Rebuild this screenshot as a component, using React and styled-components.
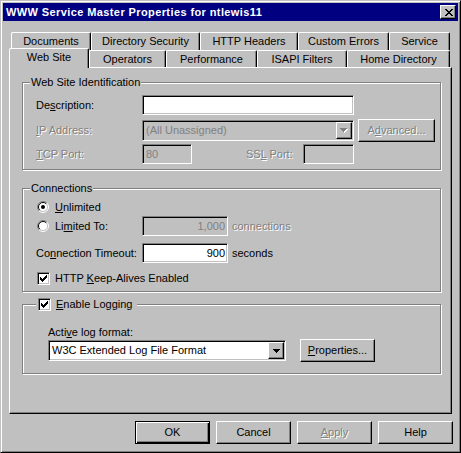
import React from 'react';
import styled, { createGlobalStyle, css } from 'styled-components';

const GlobalStyle = createGlobalStyle`
  html, body {
    margin: 0;
    padding: 0;
    background: #c0c0c0;
  }
  body {
    font-family: "Liberation Sans", Arial, sans-serif;
    font-size: 11px;
    line-height: 13px;
    color: #000;
  }
`;

const backTabs = [
  { label: 'Documents', w: 80 },
  { label: 'Directory Security', w: 109 },
  { label: 'HTTP Headers', w: 98 },
  { label: 'Custom Errors', w: 91 },
  { label: 'Service', w: 61 },
];

const frontTabs = [
  { label: 'Web Site', w: 80, active: true },
  { label: 'Operators', w: 77 },
  { label: 'Performance', w: 91 },
  { label: 'ISAPI Filters', w: 90 },
  { label: 'Home Directory', w: 103 },
];

// pixel glyphs, one rect per run: [x, y, width]
const closeRuns = [
  [0, 0, 2], [6, 0, 2],
  [1, 1, 2], [5, 1, 2],
  [2, 2, 4],
  [3, 3, 2],
  [2, 4, 4],
  [1, 5, 2], [5, 5, 2],
  [0, 6, 2], [6, 6, 2],
];

const checkRuns = [
  [6, 0, 1],
  [5, 1, 2],
  [0, 2, 1], [4, 2, 3],
  [0, 3, 2], [3, 3, 3],
  [0, 4, 5],
  [1, 5, 3],
  [2, 6, 1],
];

const arrowRuns = [
  [0, 0, 7],
  [1, 1, 5],
  [2, 2, 3],
  [3, 3, 1],
];

const runsToPath = (runs) => runs.map(([x, y, w]) => `M${x} ${y}h${w}v1h-${w}z`).join('');

function Glyph({ runs, w, h, color = '#000', shadow }) {
  const d = runsToPath(runs);
  return (
    <svg width={shadow ? w + 1 : w} height={shadow ? h + 1 : h} shapeRendering="crispEdges">
      {shadow && <path d={d} fill="#fff" transform="translate(1 1)" />}
      <path d={d} fill={color} />
    </svg>
  );
}

function Radio({ checked }) {
  return (
    <svg width="12" height="12" viewBox="0 0 12 12">
      <circle cx="6" cy="6" r="5" fill="#fff" />
      <path d="M2.1 9.9A5.5 5.5 0 0 1 9.9 2.1" fill="none" stroke="#808080" />
      <path d="M9.9 2.1A5.5 5.5 0 0 1 2.1 9.9" fill="none" stroke="#fff" />
      <path d="M2.8 9.2A4.5 4.5 0 0 1 9.2 2.8" fill="none" stroke="#000" />
      <path d="M9.2 2.8A4.5 4.5 0 0 1 2.8 9.2" fill="none" stroke="#c0c0c0" />
      {checked && <circle cx="6" cy="6" r="2" fill="#000" />}
    </svg>
  );
}

function Check({ checked }) {
  return <CheckBox>{checked && <Glyph runs={checkRuns} w={7} h={7} />}</CheckBox>;
}

function Combo({ w, disabled, children }) {
  return (
    <ComboField $w={w} $disabled={disabled}>
      <ComboText>{children}</ComboText>
      <DropButton>
        <Glyph runs={arrowRuns} w={7} h={4} color={disabled ? '#808080' : '#000'} shadow={disabled} />
      </DropButton>
    </ComboField>
  );
}

export default function App() {
  return (
    <>
      <GlobalStyle />
      <Window>
        <TitleBar>
          <Title>WWW Service Master Properties for ntlewis11</Title>
          <CloseButton aria-label="Close">
            <Glyph runs={closeRuns} w={8} h={7} />
          </CloseButton>
        </TitleBar>
        <Body>
          <TabRow $inset={2}>
            {backTabs.map((t) => (
              <Tab key={t.label} $w={t.w}>{t.label}</Tab>
            ))}
          </TabRow>
          <TabRow>
            {frontTabs.map((t) => (
              <Tab key={t.label} $w={t.w} $active={t.active}>{t.label}</Tab>
            ))}
          </TabRow>
          <Panel>
            <Group $mt={14} $h={88}>
              <Legend $ml={-6}>Web Site Identification</Legend>
              <Row $mt={6}>
                <Caption $w={106}>De<u>s</u>cription:</Caption>
                <Field $w={212} />
              </Row>
              <Row $mt={5} $h={21}>
                <Caption $w={106} $disabled><u>I</u>P Address:</Caption>
                <Combo w={212} disabled>(All Unassigned)</Combo>
                <PushButton $w={77} $ml={4} disabled>A<u>d</u>vanced...</PushButton>
              </Row>
              <Row $mt={3}>
                <Caption $w={106} $disabled><u>T</u>CP Port:</Caption>
                <Field $w={50} $disabled>80</Field>
                <Caption $w={57} $ml={54} $disabled>SS<u>L</u> Port:</Caption>
                <Field $w={51} $disabled />
              </Row>
            </Group>

            <Group $mt={18} $h={104}>
              <Legend $ml={-6}>Connections</Legend>
              <Row $mt={3} $h={18}>
                <Choice><Radio checked /><span><u>U</u>nlimited</span></Choice>
              </Row>
              <Row>
                <Choice $w={106}><Radio /><span>Li<u>m</u>ited To:</span></Choice>
                <Field $w={86} $disabled $right>1,000</Field>
                <Caption $ml={4} $disabled>connections</Caption>
              </Row>
              <Row $mt={7}>
                <Caption $w={106}>Co<u>n</u>nection Timeout:</Caption>
                <Field $w={86} $right>900</Field>
                <Caption $ml={4}>seconds</Caption>
              </Row>
              <Row $mt={5}>
                <Choice $gap={5}><Check checked /><span>HTTP <u>K</u>eep-Alives Enabled</span></Choice>
              </Row>
            </Group>

            <Group $mt={12} $h={70}>
              <Legend $ml={0} $pr={5}>
                <Choice $gap={5}><Check checked /><span><u>E</u>nable Logging</span></Choice>
              </Legend>
              <Row $mt={15} $h={13} $ml={12}>
                <Caption>Acti<u>v</u>e log format:</Caption>
              </Row>
              <Row $mt={1} $h={21} $ml={12}>
                <Combo w={238}>W3C Extended Log File Format</Combo>
                <PushButton $w={75} $ml={14}><u>P</u>roperties...</PushButton>
              </Row>
            </Group>
          </Panel>
          <Footer>
            <PushButton $w={75} $default>OK</PushButton>
            <PushButton $w={75}>Cancel</PushButton>
            <PushButton $w={75} disabled><u>A</u>pply</PushButton>
            <PushButton $w={75}>Help</PushButton>
          </Footer>
        </Body>
      </Window>
    </>
  );
}

const raised = css`
  border: 1px solid;
  border-color: #fff #000 #000 #fff;
  box-shadow: inset -1px -1px #808080;
`;

const sunken = css`
  border: 1px solid;
  border-color: #808080 #fff #fff #808080;
  box-shadow: inset 1px 1px #000, inset -1px -1px #c0c0c0;
`;

const Window = styled.div`
  box-sizing: border-box;
  width: 461px;
  height: 453px;
  display: flex;
  flex-direction: column;
  padding: 2px;
  background: #c0c0c0;
  border: 1px solid;
  border-color: #c0c0c0 #000 #000 #c0c0c0;
  box-shadow: inset 1px 1px #fff, inset -1px -1px #808080;
`;

const TitleBar = styled.div`
  flex: none;
  height: 18px;
  display: flex;
  align-items: center;
  justify-content: space-between;
  padding: 0 2px 0 3px;
  background: #000080;
`;

const Title = styled.span`
  color: #fff;
  font-weight: bold;
  letter-spacing: 0.4px;
  white-space: nowrap;
`;

const CloseButton = styled.div`
  box-sizing: border-box;
  width: 16px;
  height: 14px;
  display: flex;
  align-items: center;
  justify-content: center;
  padding-left: 1px;
  background: #c0c0c0;
  ${raised}
`;

const Body = styled.div`
  flex: 1;
  display: flex;
  flex-direction: column;
  padding: 11px 6px 0;
`;

const TabRow = styled.div`
  flex: none;
  height: ${(p) => (p.$inset ? 18 : 17)}px;
  display: flex;
  align-items: flex-start;
  padding-left: ${(p) => p.$inset || 0}px;
`;

const Tab = styled.div`
  box-sizing: border-box;
  flex: none;
  width: ${(p) => p.$w}px;
  height: 100%;
  display: flex;
  align-items: center;
  justify-content: center;
  background: #c0c0c0;
  border-top: 1px solid #fff;
  border-left: 1px solid #fff;
  border-right: 1px solid #000;
  border-radius: 2px 2px 0 0;
  box-shadow: inset -1px 0 #808080;
  white-space: nowrap;

  ${(p) =>
    p.$active &&
    css`
      position: relative;
      z-index: 1;
      height: calc(100% + 3px);
      margin-top: -2px;
      padding-bottom: 3px;
    `}
`;

const Panel = styled.div`
  box-sizing: border-box;
  flex: none;
  height: 347px;
  display: flex;
  flex-direction: column;
  padding: 0 10px 0 12px;
  border: 1px solid;
  border-color: #fff #000 #000 #fff;
  box-shadow: inset -1px -1px #808080;
`;

const Group = styled.div`
  box-sizing: border-box;
  flex: none;
  height: ${(p) => p.$h}px;
  margin-top: ${(p) => p.$mt}px;
  display: flex;
  flex-direction: column;
  padding-left: 13px;
  border: 1px solid #808080;
  box-shadow: inset 1px 1px #fff, 1px 1px #fff;
`;

const Legend = styled.div`
  align-self: flex-start;
  height: 13px;
  display: flex;
  align-items: center;
  margin: -7px 0 0 ${(p) => p.$ml}px;
  padding: 0 ${(p) => p.$pr ?? 1}px 0 1px;
  background: #c0c0c0;
  white-space: nowrap;
`;

const Row = styled.div`
  flex: none;
  display: flex;
  align-items: center;
  height: ${(p) => p.$h || 20}px;
  margin-top: ${(p) => p.$mt || 0}px;
  margin-left: ${(p) => p.$ml || 0}px;
`;

const Caption = styled.span`
  flex: none;
  width: ${(p) => (p.$w ? `${p.$w}px` : 'auto')};
  margin-left: ${(p) => p.$ml || 0}px;
  color: ${(p) => (p.$disabled ? '#808080' : '#000')};
  text-shadow: ${(p) => (p.$disabled ? '1px 1px 0 #fff' : 'none')};
  white-space: nowrap;
`;

const Choice = styled.label`
  flex: none;
  display: flex;
  align-items: center;
  gap: ${(p) => p.$gap ?? 6}px;
  width: ${(p) => (p.$w ? `${p.$w}px` : 'auto')};
  padding-left: 1px;
  box-sizing: border-box;
  white-space: nowrap;
`;

const CheckBox = styled.span`
  box-sizing: border-box;
  flex: none;
  width: 13px;
  height: 13px;
  display: flex;
  align-items: center;
  justify-content: center;
  background: #fff;
  ${sunken}
`;

const Field = styled.div`
  box-sizing: border-box;
  flex: none;
  width: ${(p) => p.$w}px;
  height: 20px;
  display: flex;
  align-items: center;
  justify-content: ${(p) => (p.$right ? 'flex-end' : 'flex-start')};
  padding: 0 2px 0 3px;
  background: ${(p) => (p.$disabled ? '#c0c0c0' : '#fff')};
  color: ${(p) => (p.$disabled ? '#808080' : '#000')};
  white-space: nowrap;
  ${sunken}
`;

const ComboField = styled.div`
  box-sizing: border-box;
  flex: none;
  width: ${(p) => p.$w}px;
  height: 21px;
  display: flex;
  align-items: stretch;
  padding: 1px;
  background: ${(p) => (p.$disabled ? '#c0c0c0' : '#fff')};
  color: ${(p) => (p.$disabled ? '#808080' : '#000')};
  ${sunken}
`;

const ComboText = styled.span`
  flex: 1;
  display: flex;
  align-items: center;
  padding-left: 2px;
  white-space: nowrap;
  overflow: hidden;
`;

const DropButton = styled.span`
  box-sizing: border-box;
  flex: none;
  width: 16px;
  display: flex;
  align-items: center;
  justify-content: center;
  background: #c0c0c0;
  ${raised}
`;

const PushButton = styled.button`
  box-sizing: border-box;
  flex: none;
  width: ${(p) => p.$w}px;
  height: 23px;
  margin: 0 0 0 ${(p) => p.$ml || 0}px;
  padding: 0;
  font: inherit;
  color: #000;
  background: #c0c0c0;
  ${(p) =>
    p.$default
      ? css`
          border: 1px solid #000;
          box-shadow: inset 1px 1px #fff, inset -1px -1px #000, inset -2px -2px #808080;
        `
      : raised}

  &:disabled {
    color: #808080;
    text-shadow: 1px 1px 0 #fff;
  }
`;

const Footer = styled.div`
  display: flex;
  justify-content: flex-end;
  gap: 6px;
  margin: 7px -1px 0 0;
`;
